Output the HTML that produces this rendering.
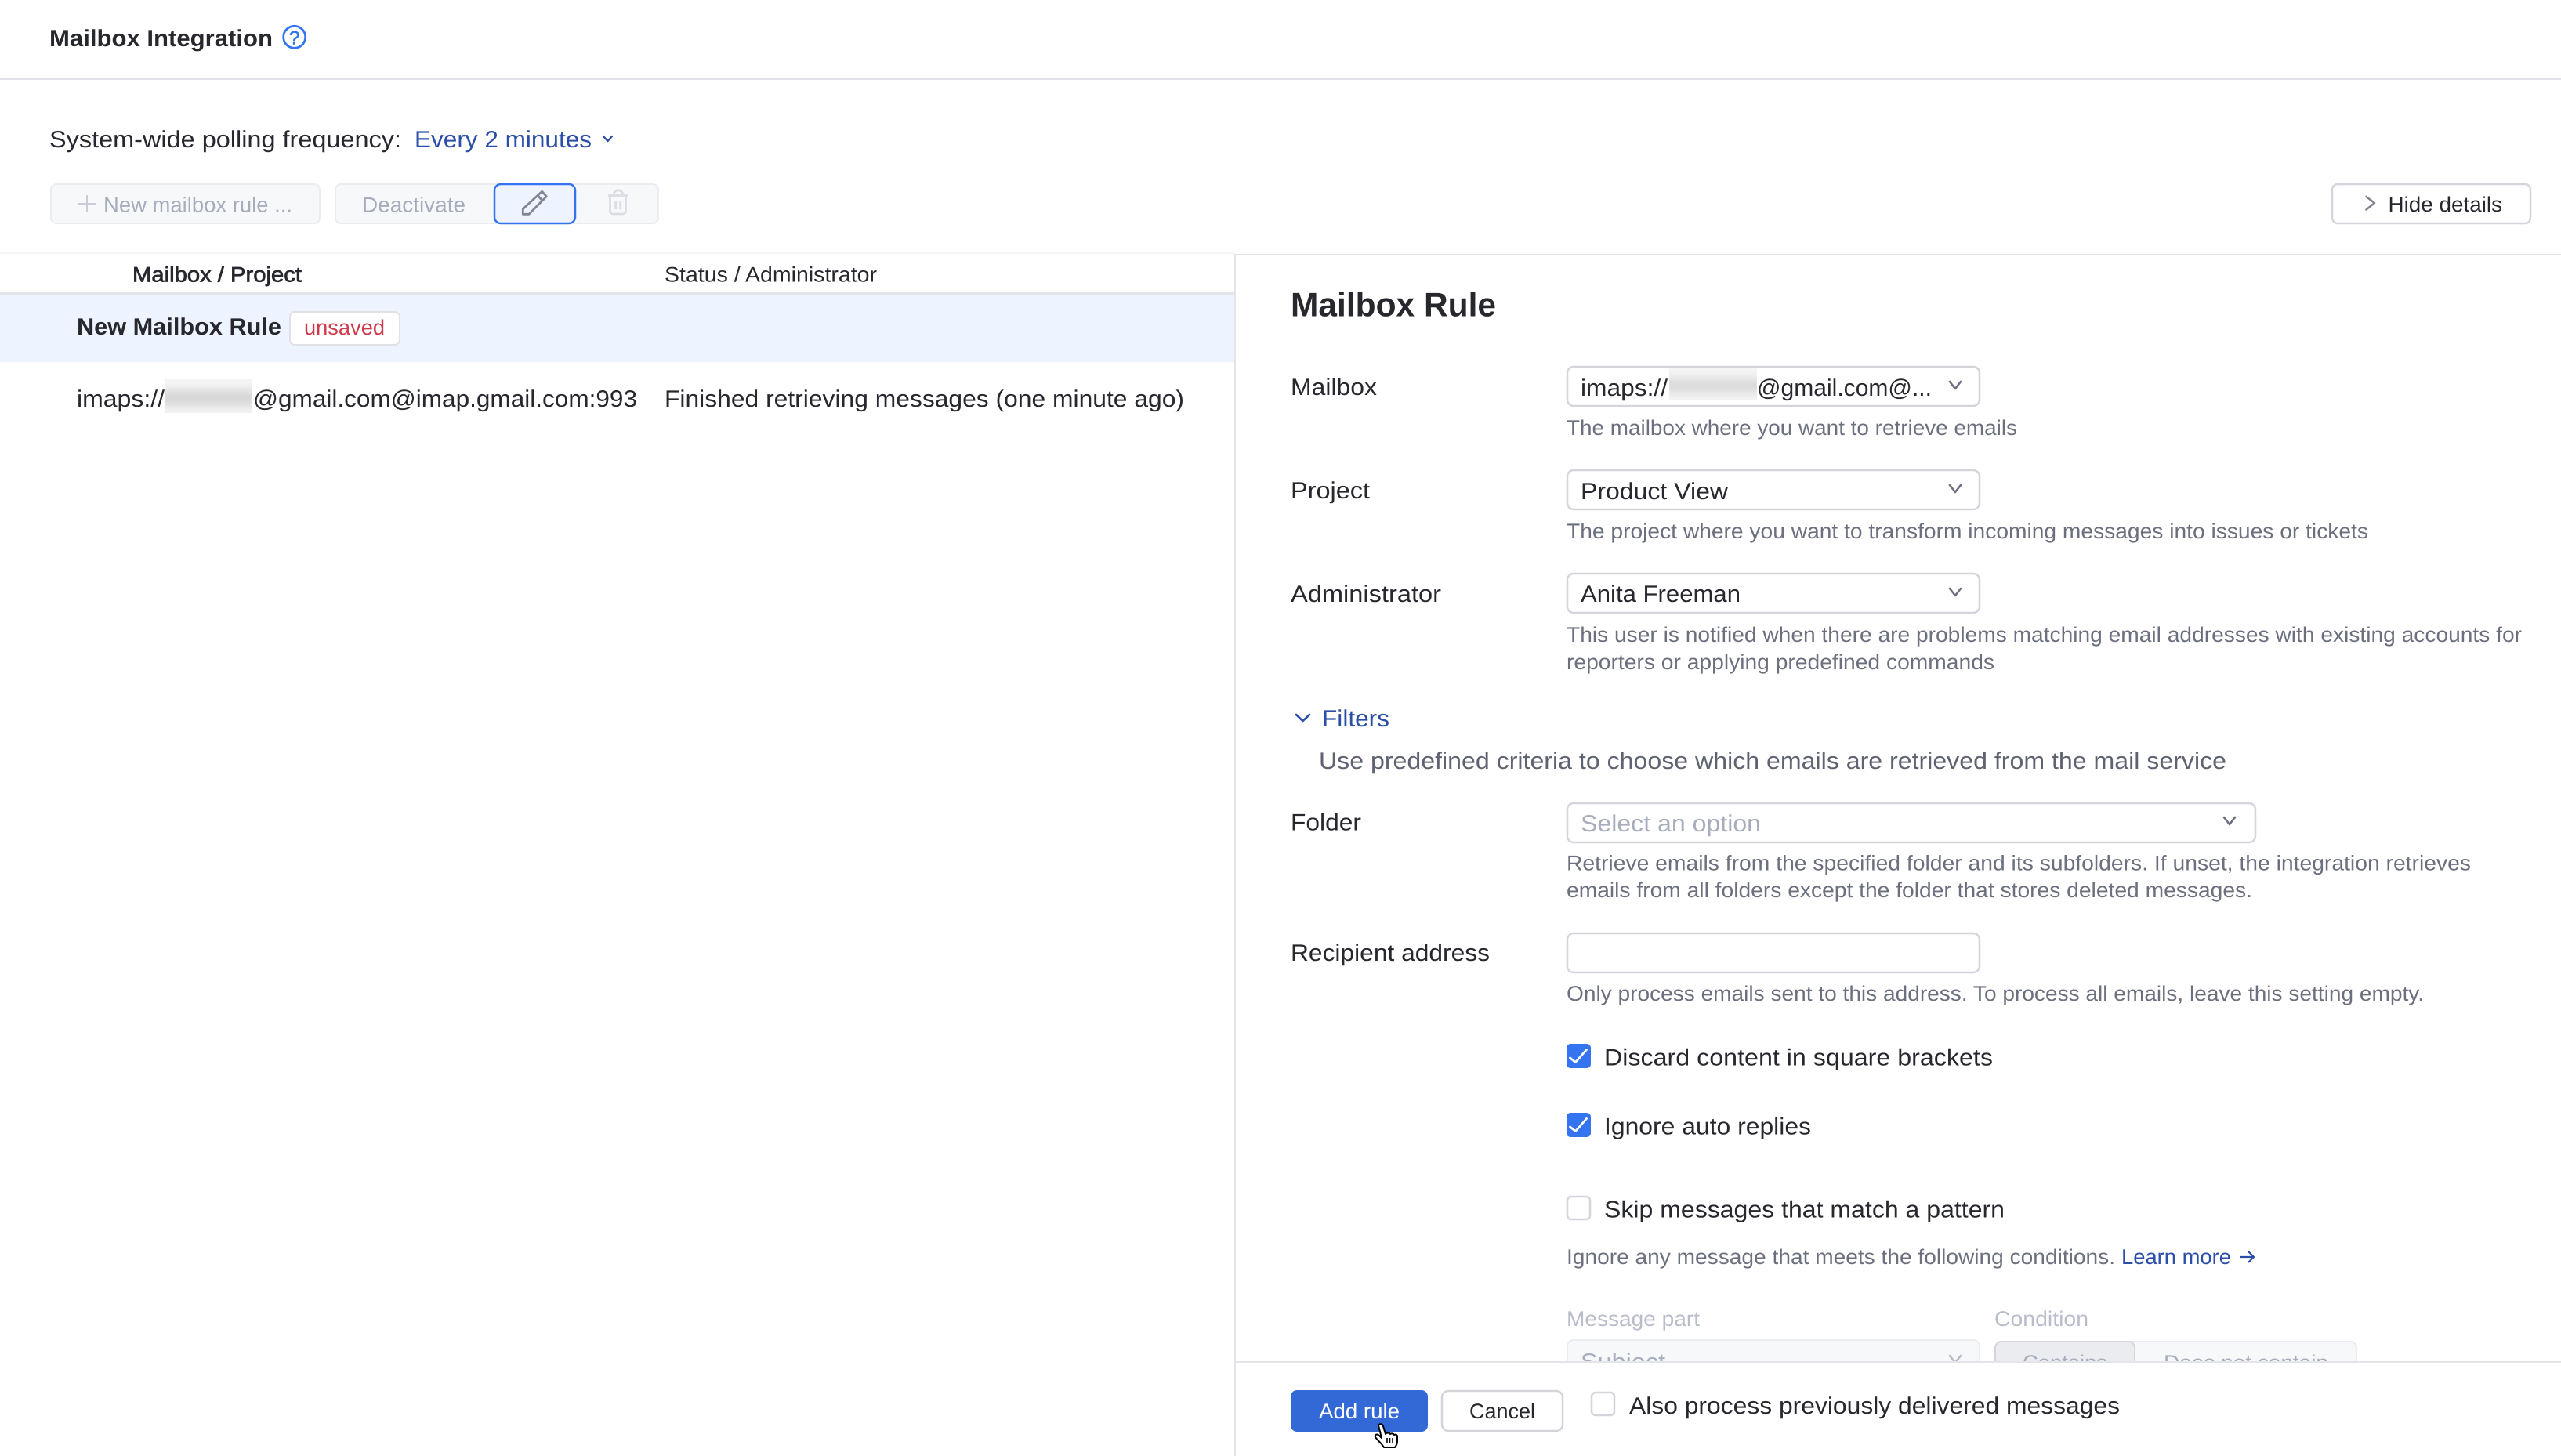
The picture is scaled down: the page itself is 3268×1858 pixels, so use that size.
<!DOCTYPE html>
<html><head><meta charset="utf-8"><title>Mailbox Integration</title>
<style>
html,body{margin:0;padding:0;background:#fff;width:3268px;height:1858px;overflow:hidden}
svg{display:block}
text{font-family:"Liberation Sans",Arial,sans-serif;font-size:30px;fill:#27282e;text-rendering:geometricPrecision;white-space:pre}
.h{font-size:27px;fill:#6c707e}
.med{stroke:#27282e;stroke-width:.7px}
.semi{font-weight:700}
.lnk{fill:#2b4fa8}
.dis{fill:#a8adbd;font-size:27px}
.dim{fill:#b9bcc9;font-size:27px}
.btn{font-size:27px}
.box{fill:#fff;stroke:#d3d5db;stroke-width:2.5px}
.chev{fill:none;stroke:#6c707e;stroke-width:2.6px;stroke-linecap:round;stroke-linejoin:round}
</style></head>
<body>
<svg xmlns="http://www.w3.org/2000/svg" width="3268" height="1858" viewBox="0 0 3268 1858">
<defs>
<filter id="b" x="-40%" y="-80%" width="180%" height="260%"><feGaussianBlur stdDeviation="7"/></filter>
<clipPath id="c1"><rect x="210" y="484" width="112" height="43"/></clipPath>
<clipPath id="c2"><rect x="2130" y="470" width="112" height="41"/></clipPath>
<clipPath id="c3"><rect x="1578" y="1640" width="1690" height="97"/></clipPath>
</defs>
<rect width="3268" height="1858" fill="#fff"/>

<!-- top bar -->
<rect x="0" y="100" width="3268" height="2" fill="#e2e3e8"/>
<text class="semi" x="63" y="59" textLength="285" lengthAdjust="spacingAndGlyphs">Mailbox Integration</text>
<circle cx="375.700" cy="47.300" r="14" fill="none" stroke="#3574f0" stroke-width="2.800"/>
<text x="375.700" y="56.500" text-anchor="middle" style="font-size:24px;fill:#3574f0;stroke:#3574f0;stroke-width:.6px">?</text>

<!-- polling -->
<text x="63" y="188" textLength="449" lengthAdjust="spacingAndGlyphs">System-wide polling frequency:</text>
<text class="lnk" x="529" y="188" textLength="226" lengthAdjust="spacingAndGlyphs">Every 2 minutes</text>
<path d="M770 174l5.500 6 5.500-6" fill="none" stroke="#2b4fa8" stroke-width="2.400" stroke-linecap="round" stroke-linejoin="round"/>

<!-- toolbar -->
<rect x="65" y="235" width="343" height="50" rx="7" fill="#f7f8fa" stroke="#ebecf0" stroke-width="2"/>
<path d="M111 249v22M100 260h22" stroke="#c9ccd6" stroke-width="2" fill="none"/>
<text class="dis" x="132" y="270.500" textLength="241" lengthAdjust="spacingAndGlyphs">New mailbox rule ...</text>
<rect x="428" y="235" width="412" height="50" rx="7" fill="#f7f8fa" stroke="#ebecf0" stroke-width="2"/>
<text class="dis" x="462" y="270.500" textLength="132" lengthAdjust="spacingAndGlyphs">Deactivate</text>
<rect x="631" y="235" width="103" height="50" rx="8" fill="#edf3ff" stroke="#3574f0" stroke-width="2.500"/>
<path d="M667.300 273.300H675L697.300 250.700 691.700 244.300 667.300 266.700ZM686 249.300L692.700 256.700" fill="none" stroke="#818594" stroke-width="2.800" stroke-linejoin="round"/>
<path d="M776 249.500H801M783 249.500c0-9 12-9 12 0M778.500 250v19c0 2.500 1.500 4 4 4h12c2.500 0 4-1.500 4-4v-19M785.700 257v10M791.700 257v10" fill="none" stroke="#dbdde3" stroke-width="2.800"/>
<rect x="2976" y="235" width="253" height="50" rx="7" fill="#fff" stroke="#d3d5db" stroke-width="2.500"/>
<path d="M3019.500 251L3030 259 3019.500 267.500" class="chev" style="stroke:#818594"/>
<text class="btn" x="3047.500" y="270" textLength="145.500" lengthAdjust="spacingAndGlyphs">Hide details</text>

<!-- section lines -->
<rect x="0" y="322" width="1576" height="2" fill="#f4f5f7"/>
<rect x="1576" y="324" width="1692" height="2" fill="#e4e5ea"/>
<rect x="1575" y="324" width="2" height="1534" fill="#e4e5ea"/>

<!-- table -->
<text class="btn med" x="169" y="359.500" textLength="216" lengthAdjust="spacingAndGlyphs">Mailbox / Project</text>
<text class="btn" x="848" y="359.500" textLength="271" lengthAdjust="spacingAndGlyphs">Status / Administrator</text>
<rect x="0" y="373" width="1575" height="3" fill="#e4e5ea"/>
<rect x="0" y="376" width="1575" height="86" fill="#edf3ff"/>
<text class="semi" x="98" y="427" textLength="261" lengthAdjust="spacingAndGlyphs">New Mailbox Rule</text>
<rect x="370" y="398" width="140" height="42" rx="6" fill="#fff" stroke="#dfe1e5" stroke-width="2"/>
<text x="388" y="427" textLength="103" lengthAdjust="spacingAndGlyphs" style="font-size:27px;fill:#cf3a4a">unsaved</text>
<text x="98" y="519" textLength="112" lengthAdjust="spacingAndGlyphs">imaps://</text>
<rect x="210" y="484" width="112" height="43" fill="#f5f5f5"/>
<g clip-path="url(#c1)"><rect x="200" y="499" width="132" height="18" fill="#d2d2d2" filter="url(#b)"/></g>
<text x="323" y="519" textLength="490" lengthAdjust="spacingAndGlyphs">@gmail.com@imap.gmail.com:993</text>
<text x="848" y="519" textLength="663" lengthAdjust="spacingAndGlyphs">Finished retrieving messages (one minute ago)</text>

<!-- detail form -->
<text x="1647" y="403.500" textLength="262" lengthAdjust="spacingAndGlyphs" style="font-size:43px;font-weight:700">Mailbox Rule</text>

<text x="1647" y="504" textLength="110" lengthAdjust="spacingAndGlyphs">Mailbox</text>
<rect class="box" x="2000" y="468" width="526" height="50" rx="8"/>
<text x="2017" y="505" textLength="111" lengthAdjust="spacingAndGlyphs">imaps://</text>
<rect x="2130" y="470" width="112" height="41" fill="#f5f5f5"/>
<g clip-path="url(#c2)"><rect x="2120" y="484" width="132" height="16" fill="#d4d4d4" filter="url(#b)"/></g>
<text x="2242" y="505" textLength="223" lengthAdjust="spacingAndGlyphs">@gmail.com@...</text>
<path class="chev" d="M2488 487l7 9 7-9"/>
<text class="h" x="1999" y="555" textLength="575" lengthAdjust="spacingAndGlyphs">The mailbox where you want to retrieve emails</text>

<text x="1647" y="636" textLength="101" lengthAdjust="spacingAndGlyphs">Project</text>
<rect class="box" x="2000" y="600" width="526" height="50" rx="8"/>
<text x="2017" y="637" textLength="188" lengthAdjust="spacingAndGlyphs">Product View</text>
<path class="chev" d="M2488 619l7 9 7-9"/>
<text class="h" x="1999" y="687" textLength="1023" lengthAdjust="spacingAndGlyphs">The project where you want to transform incoming messages into issues or tickets</text>

<text x="1647" y="768" textLength="192" lengthAdjust="spacingAndGlyphs">Administrator</text>
<rect class="box" x="2000" y="732" width="526" height="50" rx="8"/>
<text x="2017" y="768" textLength="204" lengthAdjust="spacingAndGlyphs">Anita Freeman</text>
<path class="chev" d="M2488 751l7 9 7-9"/>
<text class="h" x="1999" y="819" textLength="1219" lengthAdjust="spacingAndGlyphs">This user is notified when there are problems matching email addresses with existing accounts for</text>
<text class="h" x="1999" y="854" textLength="546" lengthAdjust="spacingAndGlyphs">reporters or applying predefined commands</text>

<path d="M1654 912l8.500 8 8.500-8" fill="none" stroke="#2b4fa8" stroke-width="2.600" stroke-linecap="round" stroke-linejoin="round"/>
<text class="lnk" x="1687" y="927" textLength="86" lengthAdjust="spacingAndGlyphs">Filters</text>
<text x="1683" y="981" textLength="1158" lengthAdjust="spacingAndGlyphs" style="fill:#5f6271">Use predefined criteria to choose which emails are retrieved from the mail service</text>

<text x="1647" y="1059.500" textLength="90" lengthAdjust="spacingAndGlyphs">Folder</text>
<rect class="box" x="2000" y="1025" width="878" height="50" rx="8"/>
<text x="2017" y="1061" textLength="230" lengthAdjust="spacingAndGlyphs" style="fill:#a8adbd">Select an option</text>
<path class="chev" d="M2838 1043l7 9 7-9"/>
<text class="h" x="1999" y="1110.500" textLength="1154" lengthAdjust="spacingAndGlyphs">Retrieve emails from the specified folder and its subfolders. If unset, the integration retrieves</text>
<text class="h" x="1999" y="1145" textLength="875" lengthAdjust="spacingAndGlyphs">emails from all folders except the folder that stores deleted messages.</text>

<text x="1647" y="1226" textLength="254" lengthAdjust="spacingAndGlyphs">Recipient address</text>
<rect class="box" x="2000" y="1191" width="526" height="50" rx="8"/>
<text class="h" x="1999" y="1277" textLength="1094" lengthAdjust="spacingAndGlyphs">Only process emails sent to this address. To process all emails, leave this setting empty.</text>

<rect x="1999" y="1332" width="31" height="31" rx="5" fill="#3574f0"/>
<path d="M2003.500 1350l7 5.500 14-16" fill="none" stroke="#fff" stroke-width="2.800" stroke-linecap="round" stroke-linejoin="round"/>
<text x="2047" y="1359.500" textLength="496" lengthAdjust="spacingAndGlyphs">Discard content in square brackets</text>

<rect x="1999" y="1420" width="31" height="31" rx="5" fill="#3574f0"/>
<path d="M2003.500 1438l7 5.500 14-16" fill="none" stroke="#fff" stroke-width="2.800" stroke-linecap="round" stroke-linejoin="round"/>
<text x="2047" y="1447.500" textLength="264" lengthAdjust="spacingAndGlyphs">Ignore auto replies</text>

<rect class="box" x="2000" y="1527" width="29" height="29" rx="5"/>
<text x="2047" y="1553.500" textLength="511" lengthAdjust="spacingAndGlyphs">Skip messages that match a pattern</text>

<text class="h" x="1999" y="1613" textLength="700" lengthAdjust="spacingAndGlyphs">Ignore any message that meets the following conditions.</text>
<text class="lnk" x="2707" y="1613" textLength="140" lengthAdjust="spacingAndGlyphs" style="font-size:27px">Learn more</text>
<path d="M2858 1604h18M2869 1597l7 7-7 7" fill="none" stroke="#2b4fa8" stroke-width="2.200"/>

<text class="dim" x="1999" y="1692" textLength="170" lengthAdjust="spacingAndGlyphs">Message part</text>
<text class="dim" x="2545" y="1692" textLength="120" lengthAdjust="spacingAndGlyphs">Condition</text>
<g clip-path="url(#c3)">
<rect x="2000" y="1710" width="526" height="50" rx="8" fill="#f7f8fa" stroke="#ebecf0" stroke-width="2"/>
<text class="dis" x="2017" y="1748" textLength="108" lengthAdjust="spacingAndGlyphs" style="font-size:30px">Subject</text>
<path class="chev" d="M2488 1730l7 9 7-9" style="stroke:#b9bcc9"/>
<rect x="2546" y="1712" width="461" height="50" rx="8" fill="#f7f8fa" stroke="#ebecf0" stroke-width="2"/>
<rect x="2546" y="1712" width="178" height="50" rx="8" fill="#ebecf0" stroke="#d3d5db" stroke-width="2"/>
<text class="dis" x="2581" y="1748" textLength="108" lengthAdjust="spacingAndGlyphs">Contains</text>
<text class="dis" x="2761" y="1748" textLength="210" lengthAdjust="spacingAndGlyphs">Does not contain</text>
</g>

<!-- footer -->
<rect x="1577" y="1737" width="1691" height="2" fill="#e4e5ea"/>
<rect x="1647" y="1774" width="175" height="53" rx="8" fill="#3369d6"/>
<text class="btn" x="1683" y="1810" textLength="103" lengthAdjust="spacingAndGlyphs" style="fill:#fff">Add rule</text>
<rect x="1840" y="1775" width="154" height="51" rx="8" fill="#fff" stroke="#d3d5db" stroke-width="2.500"/>
<text class="btn" x="1875" y="1810" textLength="84" lengthAdjust="spacingAndGlyphs">Cancel</text>
<rect class="box" x="2031" y="1777" width="29" height="29" rx="5"/>
<text x="2079" y="1804" textLength="626" lengthAdjust="spacingAndGlyphs">Also process previously delivered messages</text>

<!-- cursor -->
<g transform="translate(-3,-1)">
<path d="M1762 1820c2-3 5-2 6 1l3 10c1-2 5-2 6 0 1-1 4-1 5 1 2-1 4 0 4 2l0 6c0 4-1 5-3 8h-14c-3-5-8-9-11-13-1-3 2-5 5-2l3 3-4-16z" fill="#fff" stroke="#000" stroke-width="2" stroke-linejoin="round"/>
<path d="M1773 1836v7M1776.500 1836v7M1780 1836v7" stroke="#000" stroke-width="1.600"/>
</g>
</svg>
</body></html>
